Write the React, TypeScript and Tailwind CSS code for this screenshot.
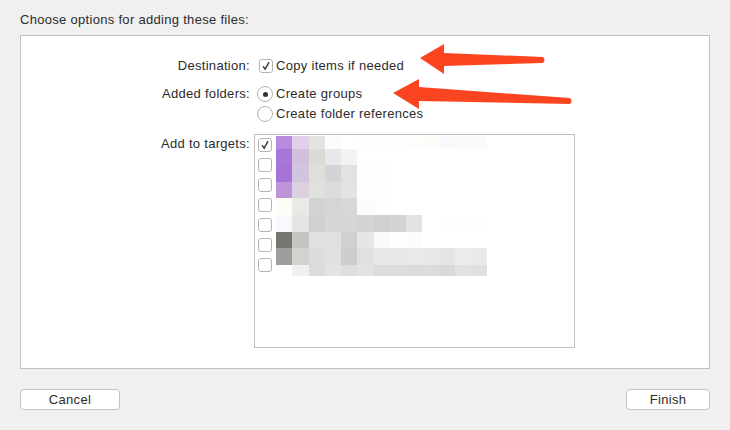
const MOSAIC: string[][] = [
  ['#b98ae0', '#e0d0ea', '#e2e4df', '#fbfbfb', '#ffffff', '#fefefe', '#fefefe', '#fefefe', '#fdfdfb', '#fdfcf8', '#f9f9fb', '#fbfaf8', '#fbfaf8', '#ffffff'],
  ['#a875d8', '#d0c0dc', '#d9dcd5', '#e8e8e8', '#f3f3f3', '#ffffff', '#ffffff', '#ffffff', '#ffffff', '#ffffff', '#ffffff', '#ffffff', '#ffffff', '#ffffff'],
  ['#a772d6', '#d2c3de', '#dde0d8', '#d4d4d4', '#e2e2e2', '#fefefe', '#fefefe', '#ffffff', '#ffffff', '#ffffff', '#ffffff', '#ffffff', '#ffffff', '#ffffff'],
  ['#be94d8', '#dccfe0', '#dfe1dc', '#dcdcdc', '#e3e3e3', '#fdfdfd', '#fefefe', '#ffffff', '#ffffff', '#ffffff', '#ffffff', '#ffffff', '#ffffff', '#ffffff'],
  ['#fcfcf4', '#e9e9e7', '#d3d3d3', '#d5d5d5', '#d7d7d7', '#fcfcfc', '#fefefe', '#ffffff', '#ffffff', '#ffffff', '#ffffff', '#ffffff', '#ffffff', '#ffffff'],
  ['#f8f9ff', '#e4e4e4', '#d0d0d0', '#d6d6d6', '#d6d6d6', '#d4d4d4', '#d0d0d0', '#d4d4d4', '#e3e3e3', '#ffffff', '#fefefe', '#fefefe', '#fefefe', '#ffffff'],
  ['#767570', '#c5c4c0', '#e0e0e0', '#e0e0e0', '#d0d0d0', '#e6e6e6', '#fafafa', '#fdfdfd', '#fcfcfc', '#ffffff', '#ffffff', '#ffffff', '#ffffff', '#ffffff'],
  ['#9c9ea0', '#d3d2ce', '#dcdcdc', '#e0e0df', '#cdcdcb', '#e0e0e0', '#e8e8e8', '#e8e8e8', '#e9e9e9', '#e7e7e7', '#e5e5e3', '#ebebeb', '#e9e9e9', '#ffffff'],
  ['#ffffff', '#f0f0ee', '#dcdcdc', '#e4e4e4', '#dedede', '#e2e2e2', '#dcdcdc', '#dcdcdc', '#dbdbd9', '#dcdcdc', '#d9d9d9', '#e1e1df', '#e0e0e0', '#ffffff'],
];

const ROW_Y = [0, 13, 29, 46, 62, 79, 96, 112, 129, 140];

function CheckMark({ size }: { size: number }) {
  return (
    <svg width={size} height={size} viewBox="0 0 14 14" fill="none">
      <path d="M3.6 7.4 L6 10.6 L10.6 2.6" stroke="#3a3a3a" strokeWidth="1.7" />
    </svg>
  );
}

function Checkbox({ checked }: { checked?: boolean }) {
  return (
    <div className="w-[14px] h-[14px] rounded-[3px] border border-[#b4b4b4] bg-white flex items-center justify-center">
      {checked && <CheckMark size={12} />}
    </div>
  );
}

function Radio({ checked }: { checked?: boolean }) {
  return (
    <div className="w-[16px] h-[16px] rounded-full border border-[#b0b0b0] bg-white flex items-center justify-center">
      {checked && <div className="w-[5px] h-[5px] rounded-full bg-[#333333]" />}
    </div>
  );
}

function Mosaic() {
  return (
    <svg width="228" height="140" viewBox="0 0 228 140" shapeRendering="crispEdges">
      {MOSAIC.map((row, r) =>
        row.map((c, i) => (
          <rect key={`${r}-${i}`} x={i * 16.25} y={ROW_Y[r]} width="16.25" height={ROW_Y[r + 1] - ROW_Y[r]} fill={c} />
        )),
      )}
    </svg>
  );
}

function Label({ children }: { children: string }) {
  return <div className="w-[229px] text-right">{children}</div>;
}

export default function App() {
  return (
    <div className="relative w-[730px] h-[430px] overflow-hidden bg-[#f0f0f0] px-[20px] text-[13px] leading-[16px] tracking-[0.3px] text-[#2c2c2c] font-['Liberation_Sans',Arial,sans-serif]">
      <div className="pt-[12px] h-[35px]">Choose options for adding these files:</div>

      {/* Options panel */}
      <div className="h-[334px] border border-[#c0c0c0] bg-white pt-[22px]">
        <div className="flex h-[16px] items-center gap-[9px]">
          <Label>Destination:</Label>
          <div className="flex items-center gap-[3px]">
            <Checkbox checked />
            <span>Copy items if needed</span>
          </div>
        </div>

        <div className="flex mt-[12px] gap-[7px]">
          <Label>Added folders:</Label>
          <div className="flex flex-col gap-[4px]">
            <div className="flex items-center gap-[3px]">
              <Radio checked />
              <span>Create groups</span>
            </div>
            <div className="flex items-center gap-[3px]">
              <Radio />
              <span>Create folder references</span>
            </div>
          </div>
        </div>

        <div className="flex mt-[12px] gap-[4px]">
          <div className="pt-[2px]">
            <Label>Add to targets:</Label>
          </div>
          <div className="w-[321px] h-[214px] border border-[#c0c0c0] bg-white flex pt-[1px]">
            <div className="flex flex-col gap-[6px] pl-[3px] pt-[2px] w-[21px]">
              <Checkbox checked />
              <Checkbox />
              <Checkbox />
              <Checkbox />
              <Checkbox />
              <Checkbox />
              <Checkbox />
            </div>
            <Mosaic />
          </div>
        </div>
      </div>

      {/* Bottom buttons */}
      <div className="flex justify-between mt-[20px]">
        <button className="w-[100px] h-[21px] rounded-[4px] border border-[#c4c4c4] bg-white text-center">Cancel</button>
        <button className="w-[84px] h-[21px] rounded-[4px] border border-[#c4c4c4] bg-white text-center">Finish</button>
      </div>

      {/* Annotation arrows */}
      <svg className="absolute left-0 top-0" width="730" height="430" viewBox="0 0 730 430" fill="#fb4520">
        <path d="M420 58 L444 44 L444 53 L543 57 Q546 60 543 63 L444 66 L444 74 Z" />
        <path d="M393 93 L419 79 L419 87 L570 98 Q573 101 570 104 L419 101 L419 109 Z" />
      </svg>
    </div>
  );
}
